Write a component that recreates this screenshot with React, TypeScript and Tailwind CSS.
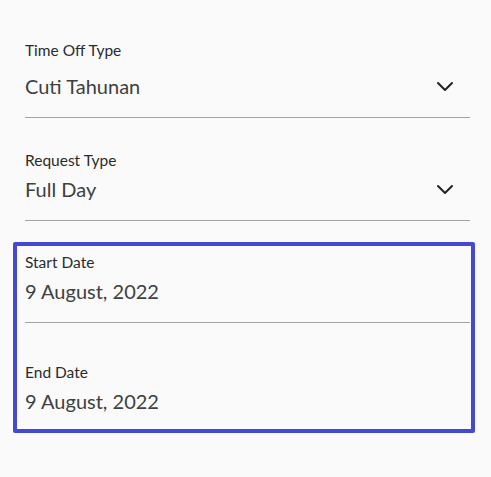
import React from 'react'

const Chevron = () => (
  <svg width="18" height="11" viewBox="0 0 18 11" fill="none" className="mr-[16px]">
    <polyline points="2,2 9,9 16,2" stroke="#222" strokeWidth="2" strokeLinecap="round" strokeLinejoin="round" />
  </svg>
)

const App = () => {
  return (
    <div className="w-[491px] h-[477px] bg-[#fafafa] text-[#333]" style={{ fontFamily: 'Lato, "Open Sans", sans-serif' }}>
      <div className="pt-[41px] pl-[25px] pr-[21px]">
        <p className="text-[15.5px] leading-[18px] text-[#2b2b2b]">Time Off Type</p>
        <div className="flex items-center justify-between mt-[15px]">
          <span className="text-[20px] leading-[24px] text-[#404040]">Cuti Tahunan</span>
          <Chevron />
        </div>
        <div className="mt-[19px] h-px bg-[#a3a3a3]" />

        <p className="mt-[33px] text-[15.5px] leading-[18px] text-[#2b2b2b]">Request Type</p>
        <div className="flex items-center justify-between mt-[8px]">
          <span className="text-[20px] leading-[24px] text-[#404040]">Full Day</span>
          <Chevron />
        </div>
        <div className="mt-[19px] h-px bg-[#a3a3a3]" />
      </div>

      <div className="mt-[21px] ml-[13px] w-[462px] border-[4px] border-[#4549d1] rounded-[2px] pt-[7px] pb-[16px] pl-[8px] pr-[1px]">
        <p className="text-[15.5px] leading-[18px] text-[#2b2b2b]">Start Date</p>
        <p className="mt-[8px] text-[20px] leading-[24px] text-[#404040]">9 August, 2022</p>
        <div className="mt-[19px] h-px bg-[#a3a3a3]" />

        <p className="mt-[40px] text-[15.5px] leading-[18px] text-[#2b2b2b]">End Date</p>
        <p className="mt-[8px] text-[20px] leading-[24px] text-[#404040]">9 August, 2022</p>
      </div>
    </div>
  )
}

export default App
